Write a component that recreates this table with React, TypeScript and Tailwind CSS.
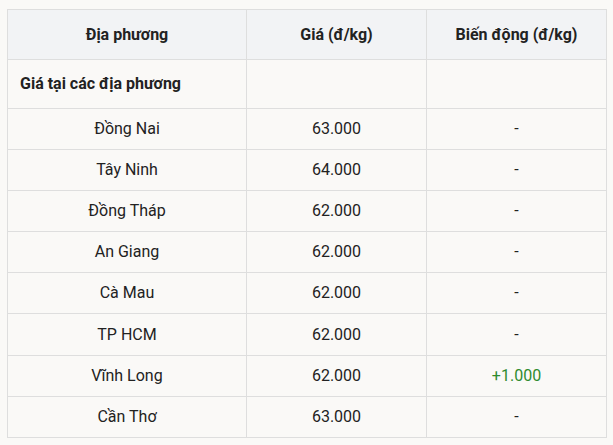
import React from 'react';

const rows = [
    { place: 'Đồng Nai', price: '63.000', change: '-' },
    { place: 'Tây Ninh', price: '64.000', change: '-' },
    { place: 'Đồng Tháp', price: '62.000', change: '-' },
    { place: 'An Giang', price: '62.000', change: '-' },
    { place: 'Cà Mau', price: '62.000', change: '-' },
    { place: 'TP HCM', price: '62.000', change: '-' },
    { place: 'Vĩnh Long', price: '62.000', change: '+1.000' },
    { place: 'Cần Thơ', price: '63.000', change: '-' },
];

export default function App() {
    return (
        <div className="w-[613px] h-[445px] bg-[#faf9f7] pt-[9px] pl-[7px] font-['Roboto',sans-serif] text-[#222]">
            <table className="border-collapse w-[599px] table-fixed text-[16px]">
                <colgroup>
                    <col className="w-[239px]" />
                    <col className="w-[180px]" />
                    <col className="w-[180px]" />
                </colgroup>
                <thead>
                    <tr className="h-[50px] bg-[#f2f3f5]">
                        <th className="border border-[#dedede] font-bold">Địa phương</th>
                        <th className="border border-[#dedede] font-bold">Giá (đ/kg)</th>
                        <th className="border border-[#dedede] font-bold">Biến động (đ/kg)</th>
                    </tr>
                </thead>
                <tbody>
                    <tr className="h-[49px]">
                        <td className="border border-[#dedede] font-bold text-left px-3">Giá tại các địa phương</td>
                        <td className="border border-[#dedede]" />
                        <td className="border border-[#dedede]" />
                    </tr>
                    {rows.map((r) => (
                        <tr key={r.place} className="h-[41.1px] text-center">
                            <td className="border border-[#dedede]">{r.place}</td>
                            <td className="border border-[#dedede]">{r.price}</td>
                            <td className={`border border-[#dedede] ${r.change === '-' ? '' : 'text-[#2e8b2e]'}`}>{r.change}</td>
                        </tr>
                    ))}
                </tbody>
            </table>
        </div>
    );
}
